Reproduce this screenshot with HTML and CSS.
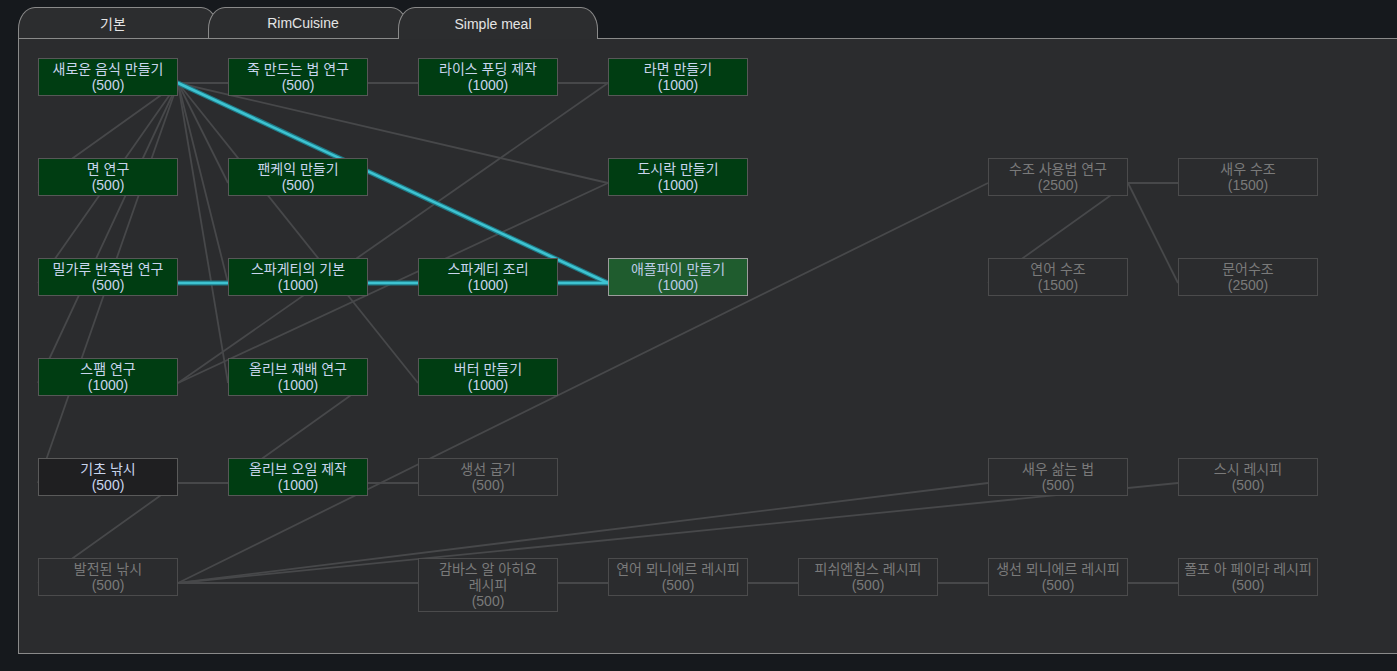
FILE: index.html
```html
<!DOCTYPE html>
<html lang="ko">
<head>
<meta charset="utf-8">
<title>Research</title>
<link rel="stylesheet" href="styles.css">
</head>
<body>
<div class="tabs">
  <div class="tab"><span>기본</span></div>
  <div class="tab"><span>RimCuisine</span></div>
  <div class="tab active"><span>Simple meal</span></div>
</div>
<div class="panel">
  <div class="canvas">
    <svg class="links" width="1378" height="614" viewBox="19 39 1378 614" xmlns="http://www.w3.org/2000/svg">
      <g class="gray">
        <line x1="178" y1="83" x2="228" y2="83"/>
        <line x1="368" y1="83" x2="418" y2="83"/>
        <line x1="558" y1="83" x2="608" y2="83"/>
        <line x1="178" y1="83" x2="38" y2="183"/>
        <line x1="178" y1="83" x2="38" y2="283"/>
        <line x1="178" y1="83" x2="38" y2="383"/>
        <line x1="178" y1="83" x2="38" y2="483"/>
        <line x1="178" y1="83" x2="228" y2="183"/>
        <line x1="178" y1="83" x2="228" y2="283"/>
        <line x1="178" y1="83" x2="228" y2="383"/>
        <line x1="178" y1="83" x2="418" y2="383"/>
        <line x1="178" y1="83" x2="608" y2="183"/>
        <line x1="178" y1="383" x2="608" y2="83"/>
        <line x1="178" y1="383" x2="608" y2="183"/>
        <line x1="368" y1="383" x2="228" y2="483"/>
        <line x1="178" y1="483" x2="418" y2="483"/>
        <line x1="178" y1="483" x2="38" y2="583"/>
        <line x1="178" y1="583" x2="988" y2="183"/>
        <line x1="178" y1="583" x2="988" y2="483"/>
        <line x1="178" y1="583" x2="1178" y2="483"/>
        <line x1="178" y1="583" x2="1178" y2="583"/>
        <line x1="1128" y1="183" x2="1178" y2="183"/>
        <line x1="1128" y1="183" x2="988" y2="283"/>
        <line x1="1128" y1="183" x2="1178" y2="283"/>
      </g>
      <g class="hl-outer">
        <line x1="178" y1="83" x2="608" y2="283"/>
        <line x1="178" y1="283" x2="228" y2="283"/>
        <line x1="368" y1="283" x2="418" y2="283"/>
        <line x1="558" y1="283" x2="608" y2="283"/>
      </g>
      <g class="hl-inner">
        <line x1="178" y1="83" x2="608" y2="283"/>
        <line x1="178" y1="283" x2="228" y2="283"/>
        <line x1="368" y1="283" x2="418" y2="283"/>
        <line x1="558" y1="283" x2="608" y2="283"/>
      </g>
    </svg>

    <div class="node done" style="--c:0;--r:0"><span class="name">새로운 음식 만들기</span><span class="cost">(500)</span></div>
    <div class="node done" style="--c:1;--r:0"><span class="name">죽 만드는 법 연구</span><span class="cost">(500)</span></div>
    <div class="node done" style="--c:2;--r:0"><span class="name">라이스 푸딩 제작</span><span class="cost">(1000)</span></div>
    <div class="node done" style="--c:3;--r:0"><span class="name">라면 만들기</span><span class="cost">(1000)</span></div>

    <div class="node done" style="--c:0;--r:1"><span class="name">면 연구</span><span class="cost">(500)</span></div>
    <div class="node done" style="--c:1;--r:1"><span class="name">팬케익 만들기</span><span class="cost">(500)</span></div>
    <div class="node done" style="--c:3;--r:1"><span class="name">도시락 만들기</span><span class="cost">(1000)</span></div>
    <div class="node locked" style="--c:5;--r:1"><span class="name">수조 사용법 연구</span><span class="cost">(2500)</span></div>
    <div class="node locked" style="--c:6;--r:1"><span class="name">새우 수조</span><span class="cost">(1500)</span></div>

    <div class="node done" style="--c:0;--r:2"><span class="name">밀가루 반죽법 연구</span><span class="cost">(500)</span></div>
    <div class="node done" style="--c:1;--r:2"><span class="name">스파게티의 기본</span><span class="cost">(1000)</span></div>
    <div class="node done" style="--c:2;--r:2"><span class="name">스파게티 조리</span><span class="cost">(1000)</span></div>
    <div class="node selected" style="--c:3;--r:2"><span class="name">애플파이 만들기</span><span class="cost">(1000)</span></div>
    <div class="node locked" style="--c:5;--r:2"><span class="name">연어 수조</span><span class="cost">(1500)</span></div>
    <div class="node locked" style="--c:6;--r:2"><span class="name">문어수조</span><span class="cost">(2500)</span></div>

    <div class="node done" style="--c:0;--r:3"><span class="name">스팸 연구</span><span class="cost">(1000)</span></div>
    <div class="node done" style="--c:1;--r:3"><span class="name">올리브 재배 연구</span><span class="cost">(1000)</span></div>
    <div class="node done" style="--c:2;--r:3"><span class="name">버터 만들기</span><span class="cost">(1000)</span></div>

    <div class="node open" style="--c:0;--r:4"><span class="name">기초 낚시</span><span class="cost">(500)</span></div>
    <div class="node done" style="--c:1;--r:4"><span class="name">올리브 오일 제작</span><span class="cost">(1000)</span></div>
    <div class="node locked" style="--c:2;--r:4"><span class="name">생선 굽기</span><span class="cost">(500)</span></div>
    <div class="node locked" style="--c:5;--r:4"><span class="name">새우 삶는 법</span><span class="cost">(500)</span></div>
    <div class="node locked" style="--c:6;--r:4"><span class="name">스시 레시피</span><span class="cost">(500)</span></div>

    <div class="node locked" style="--c:0;--r:5"><span class="name">발전된 낚시</span><span class="cost">(500)</span></div>
    <div class="node locked tall" style="--c:2;--r:5"><span class="name">감바스 알 아히요<br>레시피</span><span class="cost">(500)</span></div>
    <div class="node locked" style="--c:3;--r:5"><span class="name">연어 뫼니에르 레시피</span><span class="cost">(500)</span></div>
    <div class="node locked" style="--c:4;--r:5"><span class="name">피쉬엔칩스 레시피</span><span class="cost">(500)</span></div>
    <div class="node locked" style="--c:5;--r:5"><span class="name">생선 뫼니에르 레시피</span><span class="cost">(500)</span></div>
    <div class="node locked" style="--c:6;--r:5"><span class="name">폴포 아 페이라 레시피</span><span class="cost">(500)</span></div>
  </div>
</div>
</body>
</html>
```

FILE: styles.css
```css
html, body {
  margin: 0;
  padding: 0;
}

body {
  width: 1397px;
  height: 671px;
  overflow: hidden;
  background: #16191d;
  font-family: "Liberation Sans", "Noto Sans CJK KR", sans-serif;
  color: #e0e0e0;
}

.tabs {
  display: flex;
  padding: 7px 0 0 18px;
  height: 31px;
}

.tab {
  flex: none;
  width: 200px;
  height: 31px;
  box-sizing: border-box;
  margin-right: -10px;
  padding-right: 10px;
  border: 1px solid #8a8a8a;
  border-bottom: none;
  border-radius: 17px 17px 0 0 / 22px 22px 0 0;
  background: #2c2d2f;
  color: #e4e4e4;
  font-size: 14px;
  display: flex;
  align-items: center;
  justify-content: center;
}

.tab.active {
  position: relative;
  z-index: 1;
  height: 32px;
  margin-bottom: -1px;
  background: #2c2d2f;
}

.panel {
  margin-left: 18px;
  height: 616px;
  box-sizing: border-box;
  border: 1px solid #8a8a8a;
  border-right: none;
  background: #2b2c2e;
}

.canvas {
  position: relative;
  width: 100%;
  height: 100%;
  overflow: hidden;
}

.links {
  position: absolute;
  left: 0;
  top: 0;
}

.gray line {
  stroke: #47484a;
  stroke-width: 1.8;
}

.hl-outer line {
  stroke: #1f7a86;
  stroke-width: 5;
  stroke-linecap: round;
}

.hl-inner line {
  stroke: #3ec3d1;
  stroke-width: 2.6;
  stroke-linecap: round;
}

.node {
  position: absolute;
  left: calc(19px + var(--c) * 190px);
  top: calc(19px + var(--r) * 100px);
  width: 140px;
  height: 38px;
  box-sizing: border-box;
  border: 1px solid #575757;
  display: flex;
  flex-direction: column;
  align-items: center;
  justify-content: center;
  text-align: center;
  line-height: 16px;
  font-size: 14px;
  white-space: nowrap;
  color: #c9d5ee;
}

.node.tall {
  height: 54px;
}

.name {
  font-size: 14px;
}

.cost {
  font-size: 14px;
}

.node.done {
  background: #003d12;
}

.node.selected {
  background: #1f5c2e;
  border-color: #9c9c9c;
  color: #bccbe6;
}

.node.open {
  background: #1f1f21;
  border-color: #5a5a5a;
}

.node.locked {
  background: #2b2c2e;
  border-color: #4b4b4c;
  color: #7a7a7a;
}
```
